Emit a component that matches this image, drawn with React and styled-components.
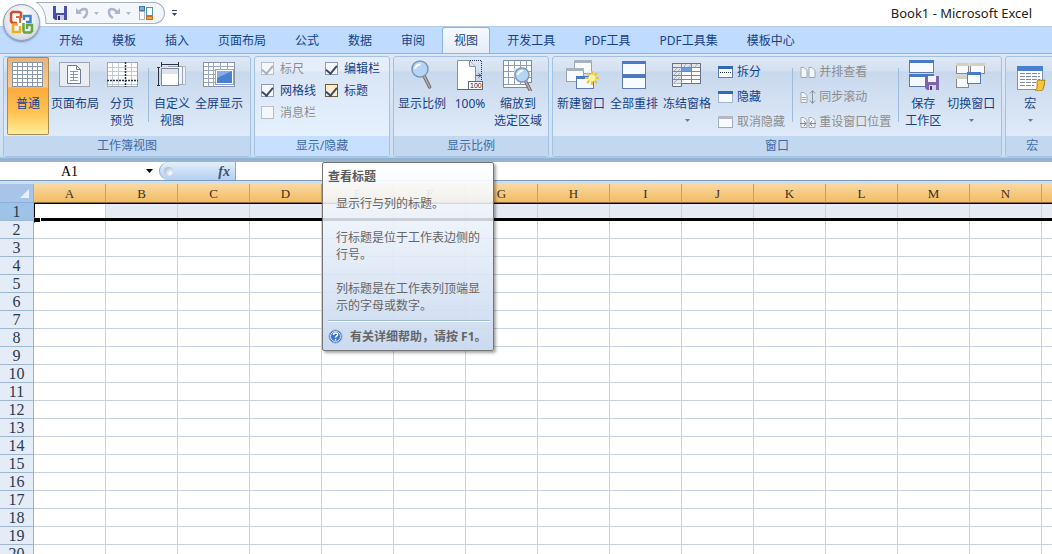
// src/App.jsx

import React, { useState } from 'react';
import styled, { createGlobalStyle } from 'styled-components';

const UI_FONT = "'Noto Sans', 'Noto Sans CJK SC', sans-serif";
const SHEET_FONT = "'Liberation Serif', serif";

const GlobalStyle = createGlobalStyle`
  * {
    box-sizing: border-box;
  }
  body {
    margin: 0;
    overflow: hidden;
    font-family: ${UI_FONT};
    font-size: 12px;
    line-height: 17px;
    color: #15428b;
  }
  button,
  input {
    font: inherit;
    color: inherit;
    margin: 0;
    padding: 0;
    border: none;
    background: none;
  }
  svg {
    display: block;
    flex: none;
  }
`;

const Window = styled.div`
  display: flex;
  flex-direction: column;
  height: 100vh;
  overflow: hidden;
  position: relative;
  background: #ffffff;
`;

/* Title bar */

const TitleBar = styled.header`
  display: flex;
  align-items: center;
  height: 26px;
  flex: none;
  padding: 0 20px 0 36px;
`;

const OfficeButton = styled.button`
  position: absolute;
  top: 4px;
  left: 3px;
  width: 37px;
  height: 37px;
  border-radius: 50%;
  border: 1px solid #8c9bb0;
  background: radial-gradient(circle at 50% 40%, #ffffff 20%, #e4e8ef 55%, #bcc6d5 100%);
  box-shadow: 0 1px 2px rgba(60, 80, 120, 0.6);
  display: flex;
  align-items: center;
  justify-content: center;
`;

const QuickAccess = styled.div`
  display: flex;
  align-items: center;
  height: 22px;
  padding-right: 9px;
  background: #f3f6fa;
  border: 1px solid #a5b0c0;
  border-left: none;
  border-radius: 0 11px 11px 0;
`;

const QuickButton = styled.button`
  display: flex;
  align-items: center;
  justify-content: center;
  width: ${(p) => (p.$narrow ? 10 : 18)}px;
  height: 20px;
  margin-left: ${(p) => (p.$spaced ? 4 : 0)}px;
`;

const WindowTitle = styled.h1`
  margin: 0 0 0 auto;
  font-size: 13px;
  font-weight: 400;
  color: #222222;
`;

/* Tabs */

const TabBar = styled.nav`
  display: flex;
  align-items: flex-end;
  gap: 5px;
  height: 27px;
  flex: none;
  padding-left: 47px;
  background: #bfdbff;
  border-top: 1px solid #b0cdea;
`;

const Tab = styled.button`
  height: 26px;
  padding: 0 12px;
  white-space: nowrap;
  ${(p) =>
    p.$active &&
    `
    padding: 0 11px;
    border: 1px solid #8db2e3;
    border-bottom: none;
    border-radius: 3px 3px 0 0;
    background: linear-gradient(#f6fafe, #e3ecf7);
  `}
`;

/* Ribbon */

const Ribbon = styled.section`
  display: flex;
  gap: 3px;
  height: 109px;
  flex: none;
  padding: 2px 0 5px 3px;
  overflow: hidden;
  border-top: 1px solid #8db2e3;
  background: linear-gradient(#dce8f6 0%, #d0e0f3 92%, #b8e0f2 95%, #8fb0cf 97%, #9db6d0 100%);
`;

const GroupBox = styled.div`
  display: flex;
  flex-direction: column;
  flex: none;
  min-width: 50px;
  border: 1px solid #a3c1e0;
  border-radius: 3px;
  overflow: hidden;
  background: ${(p) =>
    p.$light
      ? 'linear-gradient(#e6eefa 0%, #e4edf9 14%, #d9e6f7 15%, #e6f1fe 80%)'
      : 'linear-gradient(#dee8f5 0%, #d5e1f0 14%, #c8d8ec 15%, #dfebf9 80%)'};
`;

const GroupBody = styled.div`
  display: flex;
  align-items: flex-start;
  gap: ${(p) => p.$gap}px;
  flex: 1;
  padding: ${(p) => (p.$gap > 2 ? '0 6px 0 4px' : '0 7px 0 3px')};
`;

const GroupLabel = styled.div`
  height: 20px;
  line-height: 19px;
  text-align: center;
  color: #3e6aaa;
  background: ${(p) => (p.$light ? '#c8e0ff' : '#c1d8f0')};
`;

const BigButton = styled.button`
  display: flex;
  flex-direction: column;
  align-items: center;
  gap: 4px;
  height: 78px;
  min-width: ${(p) => (p.$slim ? 38 : 42)}px;
  padding-top: 2px;
  white-space: pre-line;
  border-radius: 2px;

  > span + svg {
    margin-top: 3px;
  }
  ${(p) =>
    p.$pressed &&
    `
    background: linear-gradient(#e8b27a 0%, #fbc988 38%, #fdaa3e 40%, #ffc14f 70%, #fff09a 100%);
    box-shadow: inset 0 0 0 1px #a58a5c;
  `}
`;

const Separator = styled.div`
  width: 1px;
  height: 54px;
  margin: 11px 0 0 ${(p) => (p.$inset ? 3 : 0)}px;
  background: #9dbbdc;
`;

const SmallStack = styled.div`
  display: flex;
  flex-direction: column;
  padding: 2px 2px 0;
`;

const SmallButton = styled.button`
  display: flex;
  align-items: center;
  gap: 3px;
  height: 25px;
  white-space: nowrap;
  color: ${(p) => (p.disabled ? '#8d8d8d' : '#15428b')};
`;

const CheckGrid = styled.div`
  display: grid;
  grid-template-columns: 64px 57px;
  grid-auto-rows: 22px;
  padding-left: 3px;
`;

const CheckLabel = styled.label`
  display: flex;
  align-items: center;
  gap: 6px;
  white-space: nowrap;
  color: ${(p) => (p.$disabled ? '#8d8d8d' : '#15428b')};
`;

const CheckBox = styled.input`
  appearance: none;
  width: 13px;
  height: 13px;
  border: 1px solid ${(p) => (p.disabled ? '#b8bfca' : p.$hot ? '#6b5a3c' : '#8e9bb0')};
  background: ${(p) => (p.$hot ? '#fdebcd' : '#f4f7fb')};
  display: flex;
  justify-content: center;

  &:checked::before {
    content: '';
    width: 5px;
    height: 9px;
    border: solid ${(p) => (p.disabled ? '#a9b0bb' : '#3c4a63')};
    border-width: 0 2px 2px 0;
    transform: rotate(40deg);
  }
`;

/* Formula bar */

const FormulaBar = styled.div`
  display: flex;
  height: 19px;
  flex: none;
  border-bottom: 1px solid #7d9cc2;
  background: #ffffff;
`;

const NameBox = styled.input`
  width: 139px;
  text-align: center;
  font-family: ${SHEET_FONT};
  font-size: 14px;
  color: #000000;
  outline: none;
`;

const NameArrow = styled.button`
  width: 20px;
  display: flex;
  align-items: center;
  justify-content: center;
`;

const FunctionArea = styled.div`
  display: flex;
  align-items: center;
  justify-content: space-between;
  width: 77px;
  padding: 0 5px 0 4px;
  border: 1px solid #8ba9cf;
  border-width: 0 1px 0 1px;
  border-radius: 9px 0 0 9px;
  background: linear-gradient(#e4effc, #b4cff0);
`;

const Knob = styled.span`
  width: 9px;
  height: 9px;
  border-radius: 50%;
  background: radial-gradient(circle at 70% 70%, #ffffff, #8fa9cb);
`;

const FxButton = styled.button`
  font-family: ${SHEET_FONT};
  font-style: italic;
  font-weight: 700;
  font-size: 14px;
  color: #3f5068;
`;

const FormulaInput = styled.input`
  flex: 1;
  min-width: 0;
  outline: none;
`;

/* Sheet */

const SheetArea = styled.main`
  flex: 1;
  min-height: 0;
  overflow: hidden;
  border-top: 3px solid #cfdff2;
`;

const Sheet = styled.table`
  table-layout: fixed;
  width: 1114px;
  border-collapse: separate;
  border-spacing: 0;
  font-family: ${SHEET_FONT};
`;

const Corner = styled.th`
  width: 34px;
  height: 19px;
  padding: 0 4px 0 0;
  background: #a9c4e9;
  border: 1px solid #8fb0d9;
  border-width: 0 1px 1px 0;

  svg {
    margin-left: auto;
  }
`;

const ColumnHead = styled.th`
  height: 19px;
  padding: 1px 0 0;
  font-size: 13px;
  font-weight: 400;
  line-height: 17px;
  color: #3b3020;
  background: linear-gradient(#f9d9a2, #f2bc62);
  border-right: 1px solid #dd9a4a;
  border-bottom: 1px solid #8a6a3a;
`;

const RowHead = styled.th`
  height: 18px;
  padding: 0;
  font-size: 16px;
  font-weight: 400;
  line-height: 17px;
  color: #2b3950;
  background: ${(p) => (p.$selected ? '#9ec3e8' : '#e4ecf7')};
  border: 1px solid #9eb6ce;
  border-width: 0 1px 1px 0;
`;

const Cell = styled.td`
  height: 18px;
  padding: 0;
  border: 1px solid #c8d2df;
  border-width: 0 1px 1px 0;
  ${(p) =>
    p.$selected &&
    `
    position: relative;
    background: ${p.$current ? '#ffffff' : '#e6eaf3'};
    border: none;
    box-shadow: inset 0 1px #000000, inset 0 -3px #000000,
      ${p.$current ? 'inset 1px 0 #000000,' : ''} inset -1px 0 #c8d2df;
  `}
`;

const FillHandle = styled.span`
  position: absolute;
  left: 0;
  bottom: -2px;
  width: 7px;
  height: 6px;
  background: #000000;
  border: 1px solid #ffffff;
  border-left-color: #000000;
`;

/* Screen tip */

const ScreenTip = styled.aside`
  position: absolute;
  top: 162px;
  left: 322px;
  width: 172px;
  padding: 5px 3px 5px 5px;
  border: 1px solid #767676;
  border-radius: 2px;
  background: linear-gradient(rgba(255, 255, 255, 0.96), rgba(236, 242, 250, 0.86) 30%, rgba(201, 217, 239, 0.96));
  box-shadow: 2px 2px 3px rgba(0, 0, 0, 0.35);
  color: #666666;
`;

const TipTitle = styled.h2`
  margin: 0 0 10px;
  font-size: 12px;
  font-weight: 700;
  color: #5a5a5a;
`;

const TipText = styled.p`
  margin: 0 0 17px 8px;
  width: 148px;

  &:last-of-type {
    margin-bottom: 6px;
  }
`;

const TipHelp = styled.footer`
  display: flex;
  align-items: center;
  gap: 7px;
  padding-top: 7px;
  border-top: 1px solid #9ebbde;
  box-shadow: inset 0 1px #ffffff;
  font-weight: 700;
  white-space: nowrap;
`;

/* Icons */

const Icon = ({ size = 32, children }) => (
  <svg width={size} height={size} viewBox={`0 0 ${size} ${size}`} aria-hidden="true">
    {children}
  </svg>
);

const Down = ({ color = '#5a7db0', small }) => (
  <svg width={small ? 5 : 7} height={small ? 3 : 4} viewBox="0 0 7 4" aria-hidden="true">
    <path d="M0 0h7L3.500 4z" fill={color} />
  </svg>
);

const Pane = ({ x, y, w, h, bar = '#4a78c8', line = '#5d7cae' }) => (
  <g>
    <rect x={x + 0.5} y={y + 0.5} width={w - 1} height={h - 1} fill="#f7faff" stroke={line} />
    <rect x={x} y={y} width={w} height="3" fill={bar} />
  </g>
);

const NormalIcon = () => (
  <Icon>
    <rect x="0.500" y="3.500" width="30" height="24" fill="#fff" stroke="#8593a8" />
    <path
      d="M5.500 3v25M10.500 3v25M15.500 3v25M20.500 3v25M25.500 3v25M0 7.500h31M0 11.500h31M0 15.500h31M0 19.500h31M0 23.500h31"
      stroke="#8a97ad"
    />
  </Icon>
);

const LayoutIcon = () => (
  <Icon>
    <rect x="0.500" y="3.500" width="30" height="24" fill="#e9edf3" stroke="#9aa7ba" />
    <path d="M8.500 6.500h9l4 4v14h-13z" fill="#fff" stroke="#6f7d93" />
    <path d="M17.500 6.500v4h4" fill="none" stroke="#6f7d93" />
    <path d="M11 12.500h8M11 15.500h8M11 18.500h8M11 21.500h8M14.500 12v10" stroke="#8b9ab2" />
  </Icon>
);

const BreakIcon = () => (
  <Icon>
    <rect x="1.500" y="3.500" width="30" height="24" fill="#fff" stroke="#9aa7ba" />
    <path d="M6.500 4v23M12.500 4v23M25.500 4v23M2 8.500h29M2 12.500h29M2 16.500h29M2 25.500h29" stroke="#c0cad8" />
    <path d="M19.500 3v25M1 21.500h31" stroke="#26344c" strokeWidth="1.500" strokeDasharray="2 1" />
  </Icon>
);

const CustomIcon = () => (
  <Icon>
    <path d="M15 7.500h14.500v18H20" fill="#eef1f6" stroke="#b3bbc8" />
    <path d="M12 7.500h14.500v18H12" fill="#f3f5f9" stroke="#9aa4b4" />
    <rect x="5.500" y="9.500" width="17" height="17" fill="#fff" stroke="#7d899c" />
    <rect x="6" y="10" width="16" height="5" fill="#dfe3eb" />
    <path d="M5.500 5.500h17M5.500 3v5M22.500 3v5M2.500 8.500v18M1 8.500h3M1 26.500h3" stroke="#2b3547" />
  </Icon>
);

const FullIcon = () => (
  <Icon>
    <rect x="0.500" y="3.500" width="31" height="24" fill="#fff" stroke="#8593a8" />
    <path d="M5.500 4v23M10.500 4v23M17.500 4v6M24.500 4v6M1 7.500h30M1 11.500h11M1 15.500h11M1 19.500h11M1 23.500h11" stroke="#9aa8bd" />
    <rect x="12.500" y="10.500" width="18" height="15" fill="#fff" stroke="#8fa5c8" />
    <rect x="14" y="12" width="15" height="12" fill="#4b7fd0" />
    <path d="M14 12h15L14 19z" fill="#84aeea" />
  </Icon>
);

const Lens = ({ x = 0, y = 0, r = 8 }) => (
  <g transform={`translate(${x} ${y})`}>
    <path d={`M${r * 0.5} ${r * 0.85}l${r * 0.7} ${r * 1.4}`} stroke="#6d6a72" strokeWidth="3.500" strokeLinecap="round" />
    <path d={`M${r * 0.5} ${r * 0.85}l${r * 0.7} ${r * 1.4}`} stroke="#c0aca2" strokeWidth="1.500" strokeLinecap="round" />
    <circle r={r} fill="#b4d6f6" stroke="#8096b8" strokeWidth="1.500" />
    <path d={`M${-r * 0.6} 0a${r * 0.6} ${r * 0.6} 0 0 1 ${r * 0.7} ${-r * 0.55}`} fill="none" stroke="#fff" strokeWidth="2" />
  </g>
);

const ZoomIcon = () => (
  <Icon>
    <Lens x={14} y={10} r={8} />
  </Icon>
);

const HundredIcon = () => (
  <Icon>
    <path d="M3.500 1.500h12l6 6v23h-18z" fill="#fff" stroke="#8593a8" />
    <path d="M15.500 1.500v6h6" fill="#dde4ee" stroke="#8593a8" />
    <path d="M16 1.500h11.500V22M3.500 30.500h12" fill="none" stroke="#26344c" strokeDasharray="1 1" />
    <path d="M22 16.500h5M24.500 14.500l2.500 2-2.500 2" fill="none" stroke="#2b5ca8" />
    <rect x="14.500" y="22.500" width="14" height="8" fill="#fff" stroke="#666" />
    <text x="16" y="29" fontSize="7" fontFamily="Liberation Sans, sans-serif" fill="#222">
      100
    </text>
  </Icon>
);

const FitIcon = () => (
  <Icon>
    <path d="M1.500 1.500h28v22h-3v5h-25z" fill="#fff" stroke="#7a8aa5" />
    <path d="M6.500 1v25M12.500 1v25M18.500 1v25M24.500 1v25M2 6.500h27M2 12.500h27M2 18.500h27M2 25.500h24" stroke="#8f9db5" />
    <rect x="12" y="9" width="13" height="10" fill="#cfe0f6" opacity="0.800" />
    <Lens x={20} y={16} r={7} />
  </Icon>
);

const NewWindowIcon = () => (
  <svg width="36" height="32" viewBox="0 0 36 32" aria-hidden="true">
    <Pane x={11} y={1} w={18} h={14} bar="#a8b1bf" line="#97a1b2" />
    <Pane x={3} y={9} w={18} h={14} bar="#a8b1bf" line="#97a1b2" />
    <Pane x={13} y={17} w={18} h={13} />
    <path d="M29 12v14M22 19h14M24 14l10 10M34 14L24 24" stroke="#f2c230" strokeWidth="2" />
    <circle cx="29" cy="19" r="3.500" fill="#fff3a0" />
  </svg>
);

const ArrangeIcon = () => (
  <Icon>
    <Pane x={4} y={2} w={24} h={14} />
    <Pane x={4} y={16} w={24} h={14} />
  </Icon>
);

const FreezeIcon = () => (
  <Icon>
    <rect x="1.500" y="4.500" width="28" height="20" fill="#fff" stroke="#65738c" />
    <path d="M1.500 24.500v3h9v-3" fill="#fff" stroke="#65738c" />
    <rect x="2" y="5" width="27" height="4" fill="#e3e6ec" />
    <rect x="2" y="5" width="8" height="19" fill="#e3e6ec" />
    <path d="M3 12l4-4M3 16l6-6M3 20l6-6M3 24l6-6M13 8l2-3M18 8l2-3M24 8l2-3" stroke="#a6afbd" />
    <rect x="11" y="9" width="9" height="4" fill="#6f9be0" />
    <path d="M10.500 5v20M20.500 5v20M2 8.500h27M2 12.500h27M2 16.500h27M2 20.500h27" stroke="#7b899f" />
  </Icon>
);

const SaveSpaceIcon = () => (
  <Icon>
    <Pane x={2} y={1} w={25} h={13} />
    <Pane x={2} y={15} w={25} h={13} />
    <path d="M18 17h14v14H20l-2-2z" fill="#7d64ae" />
    <path d="M21 17h8v6h-8z" fill="#f4f1fb" />
    <path d="M22 26h7v5h-7z" fill="#d7cfe9" />
    <path d="M23 27h2v4h-2z" fill="#4c3886" />
  </Icon>
);

const SwitchIcon = () => (
  <Icon>
    <Pane x={1} y={4} w={13} h={11} bar="#d3d0c6" line="#8c8a82" />
    <Pane x={15} y={4} w={15} h={11} bar="#d3d0c6" line="#8c8a82" />
    <Pane x={1} y={17} w={13} h={12} bar="#d3d0c6" line="#8c8a82" />
    <Pane x={12} y={13} w={14} h={12} />
  </Icon>
);

const MacroIcon = () => (
  <Icon>
    <rect x="3.500" y="7.500" width="25" height="23" fill="#fff" stroke="#7e93b5" />
    <rect x="3" y="7" width="26" height="5" fill="#4a80d2" />
    <path d="M6 14.500h20M6 17.500h20M6 20.500h20M6 23.500h16M6 26.500h14" stroke="#7c8ca6" strokeDasharray="5 1" />
    <path d="M23 22c2-2 5 0 8-1-1 2 0 3-1 6s-1 5-4 5-5-1-5-1c3-1 2-6 2-9z" fill="#f3c73c" stroke="#a97a17" />
  </Icon>
);

const SplitIcon = ({ mode }) => (
  <Icon size={16}>
    <rect
      x="0.500"
      y="2.500"
      width="14"
      height="11"
      fill="#f7faff"
      stroke={mode === 'off' ? '#a3abb8' : '#5f7dae'}
      strokeDasharray={mode === 'hide' ? '1 1' : undefined}
    />
    <rect x="0" y="2" width="15" height="3" fill={mode === 'off' ? '#b4bac5' : '#3566b8'} />
    {mode === 'split' && <path d="M2 8.500h11" stroke="#26344c" strokeDasharray="1 1" />}
  </Icon>
);

const SideIcon = ({ mode }) => (
  <Icon size={16}>
    <path d="M1 3.500h3l3 3v7H1z" fill="#f3f5f8" stroke="#a0a7b2" />
    {mode === 'sync' ? (
      <path d="M12.500 2v12M10 4.500l2.500-3 2.500 3M10 11.500l2.500 3 2.500-3" fill="none" stroke="#8b93a0" />
    ) : (
      <path d="M9 3.500h3l3 3v7H9z" fill="#f3f5f8" stroke="#a0a7b2" />
    )}
    {mode === 'reset' && <path d="M0 9.500h6M10 9.500h6M4 7l2 2.500-2 2.500M12 7l-2 2.500 2 2.500" fill="none" stroke="#7f8794" />}
    {mode === 'sync' && <path d="M2 8.500h4M2 10.500h4" stroke="#a0a7b2" />}
  </Icon>
);

const OfficeLogo = () => (
  <svg width="25" height="25" viewBox="0 0 25 25" fill="none" strokeWidth="2.500" aria-hidden="true">
    <path d="M12 8V3L10.500 2H3.500L2 3.500v8L3.500 13H8" stroke="#d3502a" />
    <path d="M7 7h4v6" stroke="#e2683c" strokeWidth="2" />
    <path d="M15 10V6h6.500v6H17" stroke="#3f82d0" />
    <path d="M9 14.500H4v7.500h7v-6" stroke="#f0b01e" />
    <path d="M14.500 13v8l1 1.500h6l1.500-1.500v-6h-5v4" stroke="#67a641" />
  </svg>
);

const SaveIcon = () => (
  <Icon size={16}>
    <path d="M1 1h14v14H3l-2-2z" fill="#4a50a8" />
    <path d="M4 1h8v7H4z" fill="#eef3fd" />
    <path d="M5 10h7v5H5z" fill="#c9cfea" />
    <path d="M6 11h2v4H6z" fill="#2c3178" />
  </Icon>
);

const UndoIcon = ({ flip }) => (
  <Icon size={16}>
    <g transform={flip ? 'matrix(-1 0 0 1 16 0)' : undefined}>
      <path d="M5 7c3-4 8-4 8 0 0 3-2 5-4 6" fill="none" stroke="#a9b6cd" strokeWidth="2.500" />
      <path d="M2 3v6h6z" fill="#a9b6cd" />
    </g>
  </Icon>
);

const SwapIcon = () => (
  <Icon size={16}>
    <rect x="1.500" y="6.500" width="5" height="8" fill="#fff" stroke="#aab4c4" />
    <rect x="1.500" y="1.500" width="5" height="4" fill="#7fb0dc" stroke="#3f7bb0" />
    <rect x="8.500" y="2.500" width="6" height="8" fill="#fff" stroke="#4d96b8" />
    <rect x="8.500" y="11.500" width="6" height="3" fill="#f2a24a" stroke="#c8711f" />
  </Icon>
);

const HelpIcon = () => (
  <Icon size={15}>
    <circle cx="7.500" cy="7.500" r="6.500" fill="#3c74cf" stroke="#8aa6d2" />
    <circle cx="7.500" cy="7.500" r="5" fill="none" stroke="#dbe8fb" />
    <path d="M5.500 6c0-3 4.500-2.500 4 0-.3 1-2 1.200-2 2.800M7.500 10v1.500" fill="none" stroke="#fff" strokeWidth="1.500" />
  </Icon>
);

const TABS = ['开始', '模板', '插入', '页面布局', '公式', '数据', '审阅', '视图', '开发工具', 'PDF工具', 'PDF工具集', '模板中心'];
const COLUMNS = 'ABCDEFGHIJKLMNO'.split('');
const ROWS = Array.from({ length: 20 }, (_, i) => i + 1);

const CHECKS = [
  { id: 'ruler', text: '标尺', on: true, disabled: true },
  { id: 'formula', text: '编辑栏', on: true },
  { id: 'gridlines', text: '网格线', on: true },
  { id: 'headings', text: '标题', on: true, hot: true },
  { id: 'messages', text: '消息栏', on: false, disabled: true },
];

const Group = ({ label, gap = 2, light, children }) => (
  <GroupBox $light={light}>
    <GroupBody $gap={gap}>{children}</GroupBody>
    <GroupLabel $light={light}>{label}</GroupLabel>
  </GroupBox>
);

const Big = ({ icon, text, menu, ...rest }) => (
  <BigButton {...rest}>
    {icon}
    <span>{text}</span>
    {menu && <Down small />}
  </BigButton>
);

function App() {
  const [activeTab, setActiveTab] = useState('视图');
  const [checks, setChecks] = useState(CHECKS);
  const [formula, setFormula] = useState('');

  const toggle = (id) => {
    setChecks(checks.map((c) => (c.id === id ? { ...c, on: !c.on } : c)));
  };

  return (
    <Window lang="zh-CN">
      <GlobalStyle />
      <TitleBar>
        <QuickAccess>
          <svg width="11" height="22" viewBox="0 0 11 22" aria-hidden="true">
            <path d="M0 0C7 4 10 12 10 22H0z" fill="#fff" />
            <path d="M0 0C7 4 10 12 10 22" fill="none" stroke="#a5b0c0" />
          </svg>
          <QuickButton aria-label="保存" $spaced><SaveIcon /></QuickButton>
          <QuickButton aria-label="撤消" $spaced><UndoIcon /></QuickButton>
          <QuickButton aria-label="撤消列表" $narrow><Down color="#aab6c9" small /></QuickButton>
          <QuickButton aria-label="恢复" $spaced><UndoIcon flip /></QuickButton>
          <QuickButton aria-label="恢复列表" $narrow><Down color="#aab6c9" small /></QuickButton>
          <QuickButton aria-label="切换" $spaced><SwapIcon /></QuickButton>
        </QuickAccess>
        <QuickButton aria-label="自定义快速访问工具栏">
          <svg width="5" height="6" viewBox="0 0 5 6" aria-hidden="true">
            <path d="M0 .500h5" stroke="#2c4770" />
            <path d="M0 3h5L2.500 6z" fill="#2c4770" />
          </svg>
        </QuickButton>
        <WindowTitle>Book1 - Microsoft Excel</WindowTitle>
      </TitleBar>

      <TabBar>
        {TABS.map((tab) => (
          <Tab key={tab} $active={tab === activeTab} onClick={() => setActiveTab(tab)}>
            {tab}
          </Tab>
        ))}
      </TabBar>
      <OfficeButton aria-label="Office"><OfficeLogo /></OfficeButton>

      <Ribbon>
        <Group label="工作簿视图">
          <Big icon={<NormalIcon />} text="普通" $pressed />
          <Big icon={<LayoutIcon />} text="页面布局" />
          <Big icon={<BreakIcon />} text={'分页\n预览'} />
          <Separator $inset />
          <Big icon={<CustomIcon />} text={'自定义\n视图'} />
          <Big icon={<FullIcon />} text="全屏显示" />
        </Group>

        <Group label="显示/隐藏" light>
          <CheckGrid>
            {checks.map((c) => (
              <CheckLabel key={c.id} $disabled={c.disabled}>
                <CheckBox
                  type="checkbox"
                  checked={c.on}
                  disabled={c.disabled}
                  $hot={c.hot}
                  onChange={() => toggle(c.id)}
                />
                {c.text}
              </CheckLabel>
            ))}
          </CheckGrid>
        </Group>

        <Group label="显示比例" gap={3}>
          <Big icon={<ZoomIcon />} text="显示比例" />
          <Big icon={<HundredIcon />} text="100%" />
          <Big icon={<FitIcon />} text={'缩放到\n选定区域'} />
        </Group>

        <Group label="窗口" gap={5}>
          <Big icon={<NewWindowIcon />} text="新建窗口" />
          <Big icon={<ArrangeIcon />} text="全部重排" />
          <Big icon={<FreezeIcon />} text="冻结窗格" menu />
          <SmallStack>
            <SmallButton><SplitIcon mode="split" />拆分</SmallButton>
            <SmallButton><SplitIcon mode="hide" />隐藏</SmallButton>
            <SmallButton disabled><SplitIcon mode="off" />取消隐藏</SmallButton>
          </SmallStack>
          <Separator />
          <SmallStack>
            <SmallButton disabled><SideIcon mode="side" />并排查看</SmallButton>
            <SmallButton disabled><SideIcon mode="sync" />同步滚动</SmallButton>
            <SmallButton disabled><SideIcon mode="reset" />重设窗口位置</SmallButton>
          </SmallStack>
          <Separator />
          <Big icon={<SaveSpaceIcon />} text={'保存\n工作区'} $slim />
          <Big icon={<SwitchIcon />} text="切换窗口" menu />
        </Group>

        <Group label="宏">
          <Big icon={<MacroIcon />} text="宏" menu />
        </Group>
      </Ribbon>

      <FormulaBar>
        <NameBox aria-label="名称框" defaultValue="A1" />
        <NameArrow aria-label="名称列表"><Down color="#000000" /></NameArrow>
        <FunctionArea>
          <Knob />
          <FxButton>fx</FxButton>
        </FunctionArea>
        <FormulaInput aria-label="编辑栏" value={formula} onChange={(e) => setFormula(e.target.value)} />
      </FormulaBar>

      <SheetArea>
        <Sheet>
          <thead>
            <tr>
              <Corner>
                <svg width="9" height="9" viewBox="0 0 9 9" aria-hidden="true">
                  <path d="M9 0v9H0z" fill="#e6effb" />
                </svg>
              </Corner>
              {COLUMNS.map((col) => (
                <ColumnHead key={col}>{col}</ColumnHead>
              ))}
            </tr>
          </thead>
          <tbody>
            {ROWS.map((row) => (
              <tr key={row}>
                <RowHead $selected={row === 1}>{row}</RowHead>
                {COLUMNS.map((col) => (
                  <Cell key={col} $selected={row === 1} $current={row === 1 && col === 'A'}>
                    {row === 1 && col === 'A' && <FillHandle />}
                  </Cell>
                ))}
              </tr>
            ))}
          </tbody>
        </Sheet>
      </SheetArea>

      <ScreenTip role="tooltip">
        <TipTitle>查看标题</TipTitle>
        <TipText>显示行与列的标题。</TipText>
        <TipText>行标题是位于工作表边侧的行号。</TipText>
        <TipText>列标题是在工作表列顶端显示的字母或数字。</TipText>
        <TipHelp>
          <HelpIcon />
          有关详细帮助，请按 F1。
        </TipHelp>
      </ScreenTip>
    </Window>
  );
}

export default App;
